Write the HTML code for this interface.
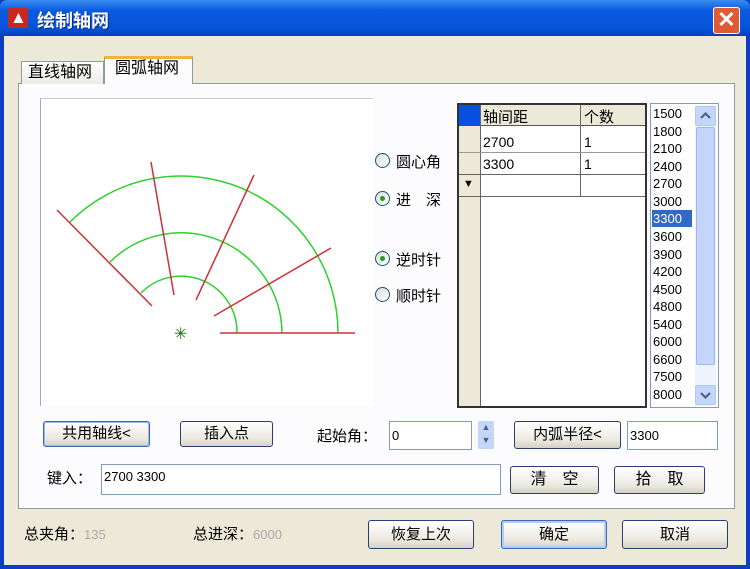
<html><head><style>
body{margin:0;width:750px;height:569px;overflow:hidden;background:#0a3fc4;font-family:"Liberation Sans","Noto Sans CJK SC",sans-serif;font-size:14px;color:#000}
.a{position:absolute}
.btn{position:absolute;border:1px solid #2b3f6e;border-radius:3px;background:linear-gradient(#fff,#ece9e0 70%,#d6d0c5);text-align:center;font-size:15px;box-sizing:border-box}
.inp{position:absolute;background:#fff;border:1px solid #7f9db9;box-sizing:border-box;font-size:13px;padding-left:2px}
.rad{position:absolute;width:15px;height:15px;border:1px solid #1c5180;border-radius:50%;background:linear-gradient(135deg,#dcdcd4,#fff);box-sizing:border-box}
.rad.on::after{content:"";position:absolute;left:4px;top:4px;width:5px;height:5px;border-radius:50%;background:#21a121}
.lbl{position:absolute;font-size:15px}
.li{position:absolute;left:653px;font-size:13px;width:38px;height:17px;line-height:17px}
.arr{position:absolute;left:695px;width:21px;height:20px;background:#c4d6fa;border-radius:2px;border:1px solid #b4c8f0;box-sizing:border-box}
</style></head><body>
<div class="a" style="left:0;top:0;width:750px;height:36px;background:linear-gradient(#3a8cf0,#0a5ae0 30%,#0553d8 80%,#0440b8);border-radius:7px 7px 0 0"></div>
<div class="a" style="left:8px;top:8px;width:20px;height:20px;background:#c8281e;border-radius:2px"></div>
<div class="a" style="left:10px;top:8px;color:#fff;font-size:17px;font-weight:bold">▲</div>
<div class="a" style="left:37px;top:7px;color:#fff;font-size:18px;font-weight:bold;text-shadow:1px 1px #0a2a80">绘制轴网</div>
<div class="a" style="left:713px;top:7px;width:27px;height:27px;background:#e05a34;border:1px solid #fff;border-radius:3px;box-sizing:border-box;color:#fff;font-size:22px;line-height:24px;text-align:center;font-weight:bold">✕</div>
<div class="a" style="left:4px;top:36px;width:742px;height:529px;background:#ece9d8"></div>
<div class="a" style="left:18px;top:83px;width:717px;height:426px;background:#fcfcfe;border:1px solid #919b9c;box-sizing:border-box"></div>
<div class="a" style="left:21px;top:61px;width:83px;height:23px;border:1px solid #919b9c;border-bottom:none;background:linear-gradient(#fff,#ecebe6);box-sizing:border-box;font-size:16px;padding-left:6px;line-height:22px">直线轴网</div>
<div class="a" style="left:104px;top:56px;width:89px;height:28px;border:1px solid #919b9c;border-top:3px solid #f0b43c;border-bottom:none;background:#fcfcfe;box-sizing:border-box;font-size:16px;padding-left:10px;line-height:20px">圆弧轴网</div>
<div class="a" style="left:40px;top:98px;width:333px;height:308px;background:#fff;border-left:1px solid #aaa;border-top:1px solid #ccc;box-sizing:border-box"></div>
<svg class="a" style="left:0;top:0" width="750" height="569">
<g fill="none" stroke="#2fd02f" stroke-width="1.5">
<path d="M237,333 A56,56 0 0 0 141,293"/>
<path d="M282,333 A101,101 0 0 0 110,262"/>
<path d="M338,333 A157,157 0 0 0 70,222"/>
</g>
<g stroke="#d0303a" stroke-width="1.5">
<line x1="220" y1="333" x2="355" y2="333"/>
<line x1="151" y1="162" x2="174" y2="295"/>
<line x1="254" y1="175" x2="196" y2="300"/>
<line x1="331" y1="248" x2="214" y2="316"/>
<line x1="57" y1="210" x2="152" y2="306"/>
</g>
<text x="174" y="339" fill="#107010" font-size="16">✳</text>
</svg>
<div class="rad" style="left:375px;top:153px"></div><div class="lbl" style="left:396px;top:151px">圆心角</div>
<div class="rad on" style="left:375px;top:191px"></div><div class="lbl" style="left:396px;top:189px">进　深</div>
<div class="rad on" style="left:375px;top:251px"></div><div class="lbl" style="left:396px;top:249px">逆时针</div>
<div class="rad" style="left:375px;top:287px"></div><div class="lbl" style="left:396px;top:285px">顺时针</div>
<div class="a" style="left:457px;top:103px;width:190px;height:305px;background:#fff;border:2px solid #333;box-sizing:border-box"></div>
<div class="a" style="left:459px;top:105px;width:22px;height:301px;background:#ece9d8"></div>
<div class="a" style="left:459px;top:105px;width:21px;height:21px;background:#0a50e0"></div>
<div class="a" style="left:480px;top:105px;width:165px;height:21px;background:#ece9d8;border-bottom:1px solid #555;box-sizing:border-box"></div>
<div class="a" style="left:580px;top:105px;width:1px;height:92px;background:#666"></div>
<div class="a" style="left:480px;top:105px;width:1px;height:301px;background:#666"></div>
<div class="a" style="left:459px;top:152px;width:186px;height:1px;background:#999"></div>
<div class="a" style="left:459px;top:174px;width:186px;height:1px;background:#666"></div>
<div class="a" style="left:459px;top:196px;width:186px;height:1px;background:#666"></div>
<div class="a" style="left:463px;top:178px;font-size:11px">▼</div>
<div class="a" style="left:483px;top:106px;font-size:15px">轴间距</div><div class="a" style="left:584px;top:106px;font-size:15px">个数</div>
<div class="a" style="left:483px;top:134px;font-size:14px">2700</div><div class="a" style="left:584px;top:134px;font-size:14px">1</div>
<div class="a" style="left:483px;top:156px;font-size:14px">3300</div><div class="a" style="left:584px;top:156px;font-size:14px">1</div>
<div class="a" style="left:650px;top:103px;width:69px;height:305px;background:#fff;border:1px solid #7f9db9;box-sizing:border-box"></div>
<div class="a" style="left:695px;top:105px;width:21px;height:301px;background:#eef3fd"></div>
<div class="arr" style="top:106px"><svg width="19" height="18"><path d="M5,11 L9.5,6.5 L14,11" fill="none" stroke="#4d6185" stroke-width="2.2"/></svg></div>
<div class="a" style="left:696px;top:127px;width:19px;height:238px;background:#c3d5fc;border:1px solid #a0b8ec;border-radius:2px;box-sizing:border-box"></div>
<div class="arr" style="top:385px"><svg width="19" height="18"><path d="M5,7 L9.5,11.5 L14,7" fill="none" stroke="#4d6185" stroke-width="2.2"/></svg></div>
<div class="a" style="left:652px;top:210px;width:40px;height:17px;background:#316ac5"></div>
<div class="li" style="top:105px">1500</div><div class="li" style="top:123px">1800</div><div class="li" style="top:140px">2100</div><div class="li" style="top:158px">2400</div><div class="li" style="top:175px">2700</div><div class="li" style="top:193px">3000</div><div class="li" style="top:210px;color:#fff">3300</div><div class="li" style="top:228px">3600</div><div class="li" style="top:246px">3900</div><div class="li" style="top:263px">4200</div><div class="li" style="top:281px">4500</div><div class="li" style="top:298px">4800</div><div class="li" style="top:316px">5400</div><div class="li" style="top:333px">6000</div><div class="li" style="top:351px">6600</div><div class="li" style="top:368px">7500</div><div class="li" style="top:386px">8000</div>
<div class="btn" style="left:43px;top:421px;width:107px;height:26px;line-height:24px;border-color:#3c66b8;box-shadow:inset 0 0 0 1px #9cbcf0">共用轴线&lt;</div>
<div class="btn" style="left:180px;top:421px;width:93px;height:26px;line-height:24px">插入点</div>
<div class="lbl" style="left:317px;top:425px">起始角：</div>
<div class="inp" style="left:389px;top:421px;width:83px;height:29px;line-height:27px">0</div>
<div class="a" style="left:478px;top:421px;width:16px;height:28px;background:#c4d6fa;border-radius:2px;color:#4d6185;font-size:9px;text-align:center;line-height:13px">▲<br>▼</div>
<div class="btn" style="left:514px;top:421px;width:107px;height:28px;line-height:26px">内弧半径&lt;</div>
<div class="inp" style="left:627px;top:421px;width:91px;height:29px;line-height:27px">3300</div>
<div class="lbl" style="left:47px;top:467px">键入：</div>
<div class="inp" style="left:101px;top:464px;width:400px;height:31px;line-height:24px">2700 3300</div>
<div class="btn" style="left:510px;top:466px;width:89px;height:28px;line-height:26px;font-size:16px">清　空</div>
<div class="btn" style="left:614px;top:466px;width:91px;height:28px;line-height:26px;font-size:16px">拾　取</div>
<div class="lbl" style="left:24px;top:523px">总夹角：<span style="color:#aaa;font-size:13px">135</span></div>
<div class="lbl" style="left:193px;top:523px">总进深：<span style="color:#aaa;font-size:13px">6000</span></div>
<div class="btn" style="left:368px;top:520px;width:106px;height:29px;line-height:27px">恢复上次</div>
<div class="btn" style="left:501px;top:520px;width:106px;height:29px;line-height:27px;border-color:#3c66b8;box-shadow:inset 0 0 0 2px #b4cbf4">确定</div>
<div class="btn" style="left:622px;top:520px;width:106px;height:29px;line-height:27px">取消</div>
</body></html>
